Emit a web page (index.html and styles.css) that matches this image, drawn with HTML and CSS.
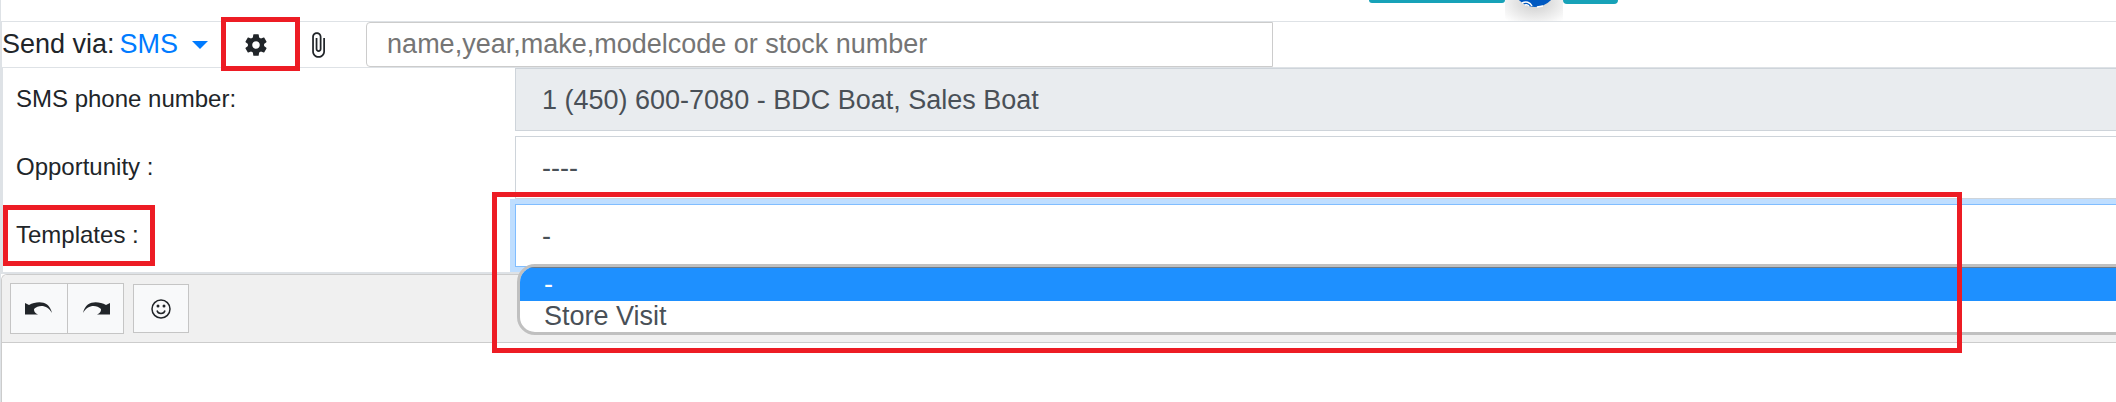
FILE: index.html
```html
<!DOCTYPE html>
<html lang="en">
<head>
  <meta charset="UTF-8">
  <meta name="viewport" content="width=device-width,initial-scale=1">
  <title>Send message</title>
  <link rel="stylesheet" href="styles.css">
</head>
<body>
<!-- bottom of the action bar, scrolled mostly out of view -->
<div class="actions">
  <div class="action action-wide"></div>
  <svg class="avatar" width="58" height="22" viewBox="0 0 58 22" aria-hidden="true">
    <defs>
      <radialGradient id="shade"><stop offset="0" stop-color="#999" stop-opacity=".5"/><stop offset="1" stop-color="#999" stop-opacity="0"/></radialGradient>
    </defs>
    <ellipse cx="30" cy="2" rx="40" ry="26" fill="url(#shade)"/>
    <circle cx="30" cy="-15" r="22" fill="#0059c1"/>
    <path d="M17 3c4-2 8-1 10 3M20 5c2-1 3 0 4 1M32 7l6-1" fill="none" stroke="#fff" stroke-width="1.5"/>
  </svg>
  <div class="action"></div>
</div>

<form class="composer">
  <div class="sendbar">
    <span>Send via:</span>
    <button type="button" class="via">SMS <span class="caret"></span></button>
    <button type="button" class="icon-btn settings marked" aria-label="Settings">
      <svg width="26" height="26" viewBox="0 0 24 24" fill="currentColor"><path d="M19.43 12.98c.04-.32.07-.64.07-.98s-.03-.66-.07-.98l2.11-1.65c.19-.15.24-.42.12-.64l-2-3.46c-.12-.22-.39-.3-.61-.22l-2.49 1c-.52-.4-1.08-.73-1.69-.98l-.38-2.65C14.46 2.18 14.25 2 14 2h-4c-.25 0-.46.18-.49.42l-.38 2.65c-.61.25-1.17.59-1.69.98l-2.49-1c-.23-.09-.49 0-.61.22l-2 3.46c-.13.22-.07.49.12.64l2.11 1.65c-.04.32-.07.65-.07.98s.03.66.07.98l-2.11 1.65c-.19.15-.24.42-.12.64l2 3.46c.12.22.39.3.61.22l2.49-1c.52.4 1.08.73 1.69.98l.38 2.65c.03.24.24.42.49.42h4c.25 0 .46-.18.49-.42l.38-2.65c.61-.25 1.17-.59 1.69-.98l2.49 1c.23.09.49 0 .61-.22l2-3.46c.12-.22.07-.49-.12-.64l-2.11-1.65zM12 15.5c-1.93 0-3.5-1.57-3.5-3.5s1.57-3.5 3.5-3.5 3.5 1.57 3.5 3.5-1.57 3.5-3.5 3.5z"/></svg>
    </button>
    <button type="button" class="icon-btn attach" aria-label="Attach a file">
      <svg width="28" height="28" viewBox="0 0 24 24" fill="currentColor"><path d="M16.5 6v11.5c0 2.21-1.79 4-4 4s-4-1.79-4-4V5c0-1.38 1.12-2.5 2.5-2.5s2.5 1.12 2.5 2.5v10.5c0 .55-.45 1-1 1s-1-.45-1-1V6H10v9.5c0 1.38 1.12 2.5 2.5 2.5s2.5-1.12 2.5-2.5V5c0-2.21-1.79-4-4-4S7 2.790 7 5v12.5c0 3.040 2.460 5.500 5.500 5.500s5.500-2.460 5.500-5.500V6h-1.500z"/></svg>
    </button>
    <input class="search" type="text" aria-label="Search stock" placeholder="name,year,make,modelcode or stock number">
  </div>

  <div class="fields">
    <div class="field">
      <label for="phone">SMS phone number:</label>
      <select id="phone" disabled><option>1 (450) 600-7080 - BDC Boat, Sales Boat</option></select>
    </div>
    <div class="field">
      <label for="opportunity">Opportunity :</label>
      <select id="opportunity"><option>----</option></select>
    </div>
    <div class="field templates">
      <label for="template" class="marked">Templates :</label>
      <select id="template" class="focused"><option>-</option><option>Store Visit</option></select>
      <ul class="options" role="listbox" aria-label="Templates">
        <li role="option" aria-selected="true">-</li>
        <li role="option" aria-selected="false">Store Visit</li>
      </ul>
      <div class="area-mark"></div>
    </div>
  </div>

  <div class="editor">
    <div class="toolbar">
      <div class="group">
        <button type="button" aria-label="Undo">
          <svg width="28" height="13" viewBox="0 0 28 13" fill="currentColor"><path d="M0 1l4 2C12-1 24-2 27 11 23 3 14 2 9 7c0 3 1 4 4 5.500H0z"/></svg>
        </button>
        <button type="button" aria-label="Redo">
          <svg width="28" height="13" viewBox="0 0 28 13" fill="currentColor"><path d="M28 1l-4 2C16-1 4-2 1 11 5 3 14 2 19 7c0 3-1 4-4 5.500h13z"/></svg>
        </button>
      </div>
      <button type="button" class="smile" aria-label="Emoji">
        <svg width="20" height="20" viewBox="0 0 20 20"><circle cx="10" cy="10" r="9" fill="none" stroke="currentColor" stroke-width="1.500"/><circle cx="7" cy="7" r="1.500" fill="currentColor"/><circle cx="13" cy="7" r="1.500" fill="currentColor"/><path d="M6 11.500c1 4 7 4 8 0" fill="none" stroke="currentColor" stroke-width="1.500"/></svg>
      </button>
    </div>
    <textarea class="message" aria-label="Message"></textarea>
  </div>
</form>
</body>
</html>
```
FILE: styles.css
```css
* { box-sizing: border-box; margin: 0; padding: 0 }
body {
  font-family: "Liberation Sans", Arial, sans-serif;
  font-size: 27px;
  color: #212529;
  background: #fff;
  height: 100vh;
  display: flex;
  flex-direction: column;
  overflow: hidden;
  border-left: 1px solid #dee2e6;
}
button, input, select, textarea { font: inherit; color: inherit }
button { background: none; border: 0 }
svg { display: block }

.actions {
  display: flex;
  align-items: flex-start;
  height: 21px;
  padding-left: 1368px;
}
.action {
  width: 55px;
  height: 4px;
  background: #17a2b8;
  border-radius: 0 0 4px 4px;
}
.action-wide { width: 136px; height: 3px }

.composer {
  flex: 1;
  display: flex;
  flex-direction: column;
}
.sendbar {
  display: flex;
  align-items: center;
  height: 47px;
  border: 1px solid #dee2e6;
  border-right: 0;
}
.via {
  display: flex;
  align-items: center;
  gap: 14px;
  margin-left: 5px;
  color: #007bff;
}
.caret {
  border: 8px solid transparent;
  border-top-color: #007bff;
  border-bottom: 0;
}
.marked { position: relative }
.marked::after {
  content: "";
  position: absolute;
  border: 5px solid #ed1c24;
}
.settings { margin-left: 35px }
.settings::after { inset: -15px -31px -13px -22px }
.attach { margin-left: 35px }
.search {
  width: 907px;
  height: 45px;
  margin-left: 34px;
  padding: 0 20px;
  border: 1px solid #ccc;
  border-radius: 4px 0 0 4px;
}
.search::placeholder { color: #757575 }

.fields {
  display: flex;
  flex-direction: column;
  gap: 5px;
  padding-bottom: 5px;
  border: solid #dee2e6;
  border-width: 0 0 2px 2px;
}
.field {
  display: grid;
  grid-template-columns: 512px 1fr;
  align-items: center;
  position: relative;
}
.field label {
  justify-self: start;
  padding: 0 0 2px 13px;
  font-size: 24px;
}
.field label.marked::after { inset: -16px -16px -15px 0 }
.field select {
  appearance: none;
  height: 63px;
  padding: 0 26px;
  color: #495057;
  background: #fff;
  border: 1px solid #ced4da;
  border-right: 0;
  opacity: 1;
}
.field select:disabled { background: #e9ecef }
.field .focused {
  border-color: #80bdff;
  box-shadow: 0 0 0 5px #bfdeff;
}
.options {
  position: absolute;
  z-index: 1;
  top: 60px;
  left: 514px;
  right: -20px;
  list-style: none;
  overflow: hidden;
  color: #495057;
  background: #fff;
  border: 3px solid #c0c0c0;
  border-radius: 18px;
}
.options li {
  padding-left: 24px;
  line-height: 31px;
}
.options [aria-selected="true"] {
  line-height: 33px;
  color: #fff;
  background: #1e90ff;
  border-top: 1px solid #6c7a89;
}
.area-mark {
  position: absolute;
  z-index: 2;
  top: -12px;
  left: 489px;
  width: 1470px;
  height: 161px;
  border: 5px solid #ed1c24;
}

.editor {
  flex: 1;
  display: flex;
  flex-direction: column;
  border: solid #ccc;
  border-width: 1px 0 0 1px;
  border-top-left-radius: 6px;
  overflow: hidden;
}
.toolbar {
  display: flex;
  align-items: center;
  gap: 9px;
  height: 68px;
  padding-left: 8px;
  background: #f0f0f0;
  border-bottom: 1px solid #ccc;
}
.toolbar button {
  display: flex;
  align-items: center;
  justify-content: center;
  width: 56px;
  height: 49px;
}
.group {
  display: flex;
  background: #f8f9fa;
  border: 1px solid #c5c5c5;
}
.group button + button { border-left: 1px solid #c5c5c5 }
.toolbar .smile {
  background: #f8f9fa;
  border: 1px solid #c5c5c5;
}
.message {
  flex: 1;
  border: 0;
  resize: none;
  padding: 8px;
}
```
